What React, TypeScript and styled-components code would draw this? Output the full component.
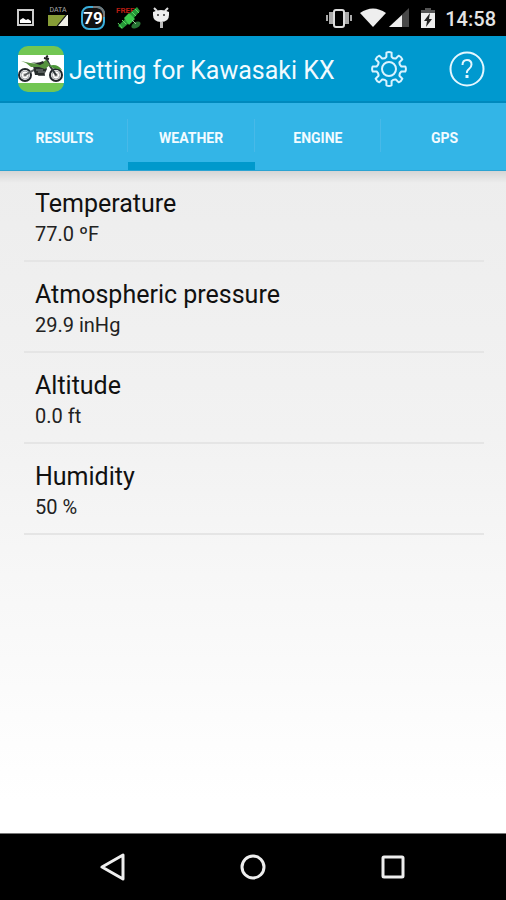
import React, { useState } from "react";
import styled, { createGlobalStyle } from "styled-components";

const GlobalStyle = createGlobalStyle`
  *, *::before, *::after { box-sizing: border-box; }
  body { margin: 0; background: #fff; font-family: Roboto, "Liberation Sans", sans-serif; }
  button { font: inherit; color: inherit; border: 0; padding: 0; background: none; cursor: pointer; }
`;

const Screen = styled.div`
  display: flex;
  flex-direction: column;
  min-height: 100vh;
`;

const StatusBar = styled.div`
  display: flex;
  align-items: center;
  justify-content: space-between;
  height: 36px;
  padding: 0 10px 0 16px;
  background: #000;
  color: #e4e4e4;
`;

const StatusGroup = styled.div<{ $gap: number }>`
  display: flex;
  align-items: center;
  gap: ${(p) => p.$gap}px;
`;

const Clock = styled.time`
  font-size: 20px;
  line-height: 24px;
  font-weight: 500;
  padding: 2px 0 0 2px;
`;

const AppBar = styled.header`
  display: flex;
  align-items: center;
  height: 67px;
  padding: 0 20px 0 18px;
  gap: 5px;
  background: #0099cf;
  border-bottom: 2px solid #0089bd;
  color: #f2fbff;
`;

const Title = styled.h1`
  flex: 1;
  margin: 0;
  padding-top: 4px;
  font-size: 25px;
  line-height: 32px;
  font-weight: 400;
  white-space: nowrap;
`;

const Actions = styled.div`
  display: flex;
  gap: 40px;
`;

const IconButton = styled.button`
  display: flex;
  align-items: center;
  justify-content: center;
  width: 38px;
  height: 38px;
`;

const TabStrip = styled.div`
  overflow: hidden;
  background: #33b5e7;
  border-bottom: 1px solid #2ba3d2;
`;

const Tabs = styled.div`
  display: grid;
  grid-template-columns: repeat(4, 1fr);
  height: 67px;
  padding-left: 1px;
  margin-right: -2px;
`;

const Tab = styled.button<{ $active: boolean }>`
  display: flex;
  align-items: center;
  justify-content: center;
  height: 67px;
  padding-top: 10px;
  border-bottom: 8px solid ${(p) => (p.$active ? "#0099cc" : "transparent")};
  background: linear-gradient(#48b9e8, #48b9e8) right 16px / 1px 33px no-repeat;
  background-origin: border-box;
  color: #f2fbff;
  font-size: 14px;
  line-height: 16px;
  font-weight: 700;
  &:last-child { background: none; }
`;

const Content = styled.main`
  flex: 1;
  padding: 0 22px 0 24px;
  background:
    linear-gradient(rgba(0, 0, 0, 0.1), rgba(0, 0, 0, 0)) top / 100% 12px no-repeat,
    linear-gradient(#ededed, #f2f2f2 40%, #ffffff 95%);
`;

const Settings = styled.ul`
  margin: 0;
  padding: 0;
  list-style: none;
`;

const Item = styled.li`
  border-bottom: 2px solid #e5e5e5;
`;

const ItemButton = styled.button`
  display: block;
  width: 100%;
  padding: 17px 11px 13px;
  text-align: left;
`;

const Name = styled.span`
  display: block;
  font-size: 25px;
  line-height: 32px;
  color: #111;
`;

const Value = styled.span`
  display: block;
  padding-top: 2px;
  font-size: 20px;
  line-height: 25px;
  color: #222;
`;

const NavBar = styled.nav`
  display: flex;
  justify-content: center;
  gap: 102px;
  padding: 14px 0;
  border-top: 1px solid #777;
  background: #000;
`;

const ImageIcon = () => (
  <svg width="20" height="20" viewBox="0 0 20 20">
    <rect x="2" y="2" width="15" height="15" fill="none" stroke="#ccc" strokeWidth="2" />
    <path d="M4 15v-3l3-2 3 2 2-1 3 2v2z" fill="#fff" />
  </svg>
);

const DataIcon = () => (
  <svg width="24" height="24" viewBox="0 0 24 24">
    <text x="12" y="6" textAnchor="middle" fontSize="7" fill="#aaa">DATA</text>
    <path d="M2 9h18L11 20H2z" fill="#879d38" />
    <path d="M12 20 21 9h1v11z" fill="#f1f1e8" />
    <path d="m11 20 9-11" stroke="#222" />
  </svg>
);

const LevelIcon = () => (
  <svg width="26" height="26" viewBox="0 0 26 26">
    <rect x="2" y="2" width="22" height="22" rx="7" fill="#111" stroke="#3aaedb" strokeWidth="2" />
    <path d="M13 2h4a7 7 0 0 1 7 7v3" fill="none" stroke="#777" strokeWidth="2" />
    <text x="13" y="19" textAnchor="middle" fontSize="17" fontWeight="700" fill="#fff">79</text>
  </svg>
);

const SatelliteIcon = () => (
  <svg width="26" height="26" viewBox="0 0 26 26">
    <text x="0" y="8" fontSize="8" fontWeight="700" fill="#b71d12">FREE</text>
    <path d="m2 21 7-7 4 4-7 6zM13 9l8-7 3 4-7 8z" fill="#269939" />
    <path d="m8 13 5-5 6 6-6 6z" fill="#3bc94c" />
    <path d="m2 18 4 5m0-8 4 4m6-12 4 4m-1-7 4 4" stroke="#59db60" />
    <ellipse cx="20" cy="20" rx="5" ry="3" fill="#287435" transform="rotate(-30 20 20)" />
    <path d="m16 15 4 4" stroke="#9bc89b" />
  </svg>
);

const RobotIcon = () => (
  <svg width="18" height="24" viewBox="0 0 18 24">
    <path d="M2 2 5 5m11-3-3 3" stroke="#ddd" strokeWidth="2" />
    <path d="M1 6q8-4 16 0v3q0 7-8 7T1 9z" fill="#eee" />
    <circle cx="6" cy="9" r="1" fill="#333" />
    <circle cx="12" cy="9" r="1" fill="#333" />
    <path d="M8 16h3v6H8z" fill="#bbb" />
  </svg>
);

const VibrateIcon = () => (
  <svg width="26" height="22" viewBox="0 0 26 22" fill="#aaa">
    <path d="M0 8h2v6H0zM3 5h4v12H3zM19 5h4v12h-4zM24 8h2v6h-2z" />
    <rect x="8" y="3" width="10" height="17" rx="2" fill="#000" stroke="#ddd" strokeWidth="2" />
  </svg>
);

const WifiIcon = () => (
  <svg width="26" height="20" viewBox="0 0 26 20">
    <path d="M0 5Q13-4 26 5L13 19z" fill="#eee" />
  </svg>
);

const SignalIcon = () => (
  <svg width="20" height="20" viewBox="0 0 20 20">
    <path d="M20 0v19H0z" fill="#484848" />
    <path d="M13 7v12H0z" fill="#eee" />
  </svg>
);

const BatteryIcon = () => (
  <svg width="18" height="22" viewBox="-4 0 18 22">
    <path d="M4 1h6v2h4v4H0V3h4z" fill="#555" />
    <path d="M0 6h14v15H0z" fill="#eee" />
    <path d="M9 6 3 14h3l-1 6 6-8H8z" fill="#222" />
  </svg>
);

const Wheel = ({ cx }: { cx: number }) => (
  <g fill="none">
    <circle cx={cx} cy="29" r="6" stroke="#20252a" strokeWidth="2" />
    <circle cx={cx} cy="29" r="4" stroke="#a7aaad" strokeWidth="1" />
    <circle cx={cx} cy="29" r="1" fill="#333" stroke="#333" />
    <path d={`M${cx - 4} 26l8 6m-8 0 8-6`} stroke="#aaa" strokeWidth="0.5" />
  </g>
);

const BikeIcon = () => (
  <svg width="46" height="46" viewBox="0 0 46 46" role="img" aria-label="Dirt bike">
    <rect width="46" height="46" rx="10" fill="#72c653" />
    <path d="M0 9h46v28H0z" fill="#fff" />
    <Wheel cx={7} />
    <Wheel cx={38} />
    <path d="M7 29 16 24l5 5h6" fill="none" stroke="#5b6062" strokeWidth="2" />
    <path d="m28 12 4 8 6 9" fill="none" stroke="#30373a" strokeWidth="2" />
    <path d="M15 20 27 19l2 4-3 6H17z" fill="#272d2c" />
    <path d="M18 24h7m-5 2h7" stroke="#858b89" />
    <path d="m3 15 9 2 10 1 6-4 4 5-5 4-6-2-8 0-5-4z" fill="#56933f" />
    <path d="M13 16q7 2 12-1l1 2-4 2z" fill="#252b29" />
    <path d="M31 20q8-3 13 4l-9-2z" fill="#4c9839" />
    <path d="m26 12 5 1m-3-2 2-1" stroke="#222" strokeWidth="2" />
  </svg>
);

const gearPath = (() => {
  const point = (r: number, deg: number) => {
    const a = (deg * Math.PI) / 180;
    return `${(18 + r * Math.cos(a)).toFixed(2)} ${(18 + r * Math.sin(a)).toFixed(2)}`;
  };
  let d = "";
  for (let i = 0; i < 8; i++) {
    const a = i * 45;
    d += `${i ? "L" : "M"}${point(12.5, a - 12)}L${point(16.5, a - 9)}Q${point(17.5, a)} ${point(16.5, a + 9)}L${point(12.5, a + 12)}Q${point(11, a + 22.5)} ${point(12.5, a + 33)}`;
  }
  return d + "Z";
})();

const GearIcon = () => (
  <svg width="36" height="36" viewBox="0 0 36 36" fill="none" stroke="#d9f3ff" strokeWidth="2" strokeLinejoin="round">
    <path d={gearPath} />
    <circle cx="18" cy="18" r="7" />
  </svg>
);

const HelpIcon = () => (
  <svg width="36" height="36" viewBox="0 0 36 36" fill="none" stroke="#e4f7ff" strokeWidth="2">
    <circle cx="18" cy="18" r="16.5" />
    <path d="M13.500 14q0-5 4.500-5t4.500 4.500q0 2.500-2.500 4.500t-2 4" />
    <path d="M18 24v3" strokeWidth="3" />
  </svg>
);

const BackIcon = () => (
  <svg width="28" height="28" viewBox="0 0 28 28">
    <path d="M24 2v24L3 14z" fill="none" stroke="#eee" strokeWidth="3" strokeLinejoin="round" />
  </svg>
);
const HomeIcon = () => (
  <svg width="28" height="28" viewBox="0 0 28 28">
    <circle cx="14" cy="14" r="11" fill="none" stroke="#eee" strokeWidth="3" />
  </svg>
);
const RecentIcon = () => (
  <svg width="28" height="28" viewBox="0 0 28 28">
    <rect x="4" y="4" width="20" height="20" rx="1" fill="none" stroke="#eee" strokeWidth="3" />
  </svg>
);

const tabs = ["RESULTS", "WEATHER", "ENGINE", "GPS"];
const readings = [
  { name: "Temperature", value: "77.0 ºF" },
  { name: "Atmospheric pressure", value: "29.9 inHg" },
  { name: "Altitude", value: "0.0 ft" },
  { name: "Humidity", value: "50 %" },
];

export default function App() {
  const [active, setActive] = useState("WEATHER");
  return (
    <Screen>
      <GlobalStyle />
      <StatusBar>
        <StatusGroup $gap={10}>
          <ImageIcon />
          <DataIcon />
          <LevelIcon />
          <SatelliteIcon />
          <RobotIcon />
        </StatusGroup>
        <StatusGroup $gap={8}>
          <VibrateIcon />
          <StatusGroup $gap={3}>
            <WifiIcon />
            <SignalIcon />
          </StatusGroup>
          <BatteryIcon />
          <Clock>14:58</Clock>
        </StatusGroup>
      </StatusBar>
      <AppBar>
        <BikeIcon />
        <Title>Jetting for Kawasaki KX</Title>
        <Actions>
          <IconButton aria-label="Settings"><GearIcon /></IconButton>
          <IconButton aria-label="Help"><HelpIcon /></IconButton>
        </Actions>
      </AppBar>
      <TabStrip>
        <Tabs role="tablist">
          {tabs.map((tab) => (
            <Tab
              key={tab}
              role="tab"
              aria-selected={tab === active}
              $active={tab === active}
              onClick={() => setActive(tab)}
            >
              {tab}
            </Tab>
          ))}
        </Tabs>
      </TabStrip>
      <Content>
        <Settings>
          {readings.map((r) => (
            <Item key={r.name}>
              <ItemButton>
                <Name>{r.name}</Name>
                <Value>{r.value}</Value>
              </ItemButton>
            </Item>
          ))}
        </Settings>
      </Content>
      <NavBar>
        <IconButton aria-label="Back"><BackIcon /></IconButton>
        <IconButton aria-label="Home"><HomeIcon /></IconButton>
        <IconButton aria-label="Recent apps"><RecentIcon /></IconButton>
      </NavBar>
    </Screen>
  );
}
